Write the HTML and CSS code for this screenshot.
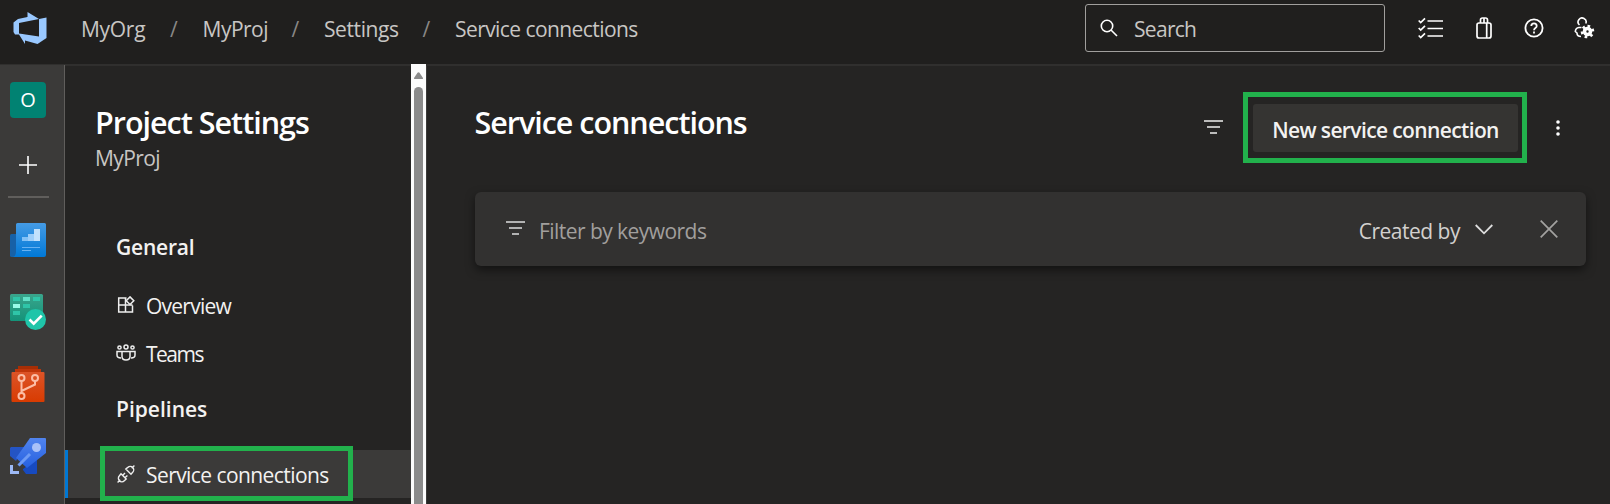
FILE: index.html
```html
<!DOCTYPE html>
<html lang="en">
<head>
<meta charset="utf-8">
<title>Service connections - Settings</title>
<link rel="stylesheet" href="styles.css">
</head>
<body>
<div class="app">
  <header class="topbar">
    <svg class="logo" width="34" height="34" viewBox="0 0 34 34"><path fill="#99c8ff" fill-rule="evenodd" d="M14.500 0 26 7 33.500 5.500V26L24.500 32 12 28.500V32L6 22.500H2L.5 20V10.500L5 7 14.500 5ZM26 7 6 11V21.500L26 24.500Z"/></svg>
    <nav class="crumbs">
      <span class="c-org">MyOrg</span><i>/</i><span class="c-proj">MyProj</span><i>/</i><span class="c-set">Settings</span><i>/</i><span class="c-svc">Service connections</span>
    </nav>
    <div class="search">
      <svg width="18" height="18" viewBox="0 0 18 18" fill="none" stroke="#fff" stroke-width="1.600"><circle cx="7" cy="7" r="5.700"/><path d="m11 11 6 6"/></svg>
      <span>Search</span>
    </div>
    <div class="tools">
      <svg width="26" height="22" viewBox="0 0 26 22" fill="none" stroke="#fff" stroke-width="1.700"><path d="M9.500 4H25M9.500 11.500H25M9.500 19H25M.7 3.500l2 2L7 1.300M.7 11l2 2L7 8.800M.7 18.500l2 2L7 16.300"/></svg>
      <svg width="16" height="22" viewBox="0 0 16 22" fill="none" stroke="#fff" stroke-width="1.700"><rect x="1" y="6" width="14" height="15" rx="2"/><path d="M4.500 6V3Q4.500 1 6.500 1h3q2 0 2 2v3M8 1v5M10.700 6v15"/></svg>
      <svg width="20" height="20" viewBox="0 0 20 20" fill="none" stroke="#fff" stroke-width="1.800"><circle cx="10" cy="10" r="8.600"/><path d="M7.300 8Q7.300 5.300 10 5.300T12.700 8Q12.700 9.200 11.400 10T10 12.300M10 13.600v2"/></svg>
      <svg width="22" height="22" viewBox="0 0 22 22" fill="none" stroke="#fff" stroke-width="1.600"><path d="M5.500 8A4 4 0 1 1 11.800 6.500M7.500 10.500H5Q1.500 11 1.300 14.500L3 16Q3 19.500 7 19.500"/><circle cx="13.500" cy="14.500" r="3" stroke-width="3.600"/><path stroke-width="2.600" stroke-dasharray="2.600 3.160" d="M13.500 9a5.500 5.500 0 1 1-.01 0"/></svg>
    </div>
  </header>
  <div class="body">
    <aside class="rail">
      <div class="avatar">O</div>
      <svg class="plus" width="18" height="18" viewBox="0 0 18 18" stroke="#fff" stroke-width="1.600"><path d="M9 0v18M0 9h18"/></svg>
      <hr>
      <svg class="app-icon" width="36" height="36" viewBox="0 0 36 36">
        <defs><linearGradient id="b" x2="0" y2="1"><stop stop-color="#459be5"/><stop offset="1" stop-color="#0078d7"/></linearGradient></defs>
        <rect y="12" width="10" height="23" rx="1.500" fill="#1761a7"/><path fill="url(#b)" d="M7.500 1H34.500Q36 1 36 2.500V33Q36 35 34 35H3Q6 34 6 30V2.500Q6 1 7.500 1Z"/><path fill="#83c1f6" d="M12 15h6v-3h6v7H12Z"/><path fill="#c3e1fc" d="M24 7h6v12h-6Z"/><path fill="#9dcefa" d="M18 12h6v7h-6Z"/><path stroke="#68b1f1" d="M12 25.500h18M12 28.500h9"/>
      </svg>
      <svg class="app-icon" width="36" height="36" viewBox="0 0 36 36">
        <defs><linearGradient id="g" x2="0" y2="1"><stop stop-color="#3aa58c"/><stop offset="1" stop-color="#149379"/></linearGradient></defs>
        <rect width="33" height="27" rx="1.500" fill="url(#g)"/><path fill="#2fc5a8" d="M3 3h7v4H3Zm20 0h7v4h-7ZM13 10h7v4h-7ZM3 17h7v4H3Z"/><path fill="#62e2c8" d="M13 3h7v4h-7Z"/><path fill="#98fbe8" d="M3 10h7v4H3Z"/><circle cx="25.500" cy="25.500" r="10.500" fill="#1fc5a9"/><path fill="none" stroke="#fff" stroke-width="2.600" d="m19.500 25.500 4.200 4.200 8-8"/>
      </svg>
      <svg class="app-icon" width="36" height="36" viewBox="0 0 36 36">
        <defs><linearGradient id="r" x2="0" y2="1"><stop stop-color="#dc5428"/><stop offset="1" stop-color="#d83b01"/></linearGradient></defs>
        <path fill="#a72e05" d="M8 0H28V3H8Z"/><path fill="#bf360a" d="M5 3H31V6H5Z"/><rect x="1.500" y="6" width="33" height="30" rx="1" fill="url(#r)"/><g fill="none" stroke="#fbbda5" stroke-width="2"><circle cx="11.500" cy="12" r="3"/><circle cx="25" cy="12" r="3"/><circle cx="11.500" cy="30" r="3"/><path d="M11.500 15v12M25 15v3.500L11.500 25"/></g>
      </svg>
      <svg class="app-icon" width="36" height="36" viewBox="0 0 36 36">
        <defs><linearGradient id="p" x2="0" y2="1"><stop stop-color="#5184ee"/><stop offset="1" stop-color="#2560e0"/></linearGradient></defs>
        <path fill="#2454c4" d="M1 9H15L6 23 0 18V10Z"/><path fill="#174ac0" d="M13 31 27 21V35Q27 36 26 36H16L13 32Z"/><path fill="url(#p)" d="M20 0H35Q36 0 36 1V15L17 30 6 20Z"/><circle cx="26.500" cy="9.500" r="4.500" fill="#a9c1f8"/><path stroke="#6d9bf4" stroke-width="3" d="M8.500 27.500 20 16"/><path fill="#9db9f5" d="M0 27h3v6h6v3H0Z"/>
      </svg>
    </aside>
    <aside class="panel">
      <div class="panel-title">Project Settings</div>
      <div class="panel-sub">MyProj</div>
      <div class="group g-general">General</div>
      <div class="item">
        <svg width="18" height="18" viewBox="0 0 18 18" fill="none" stroke="#eee" stroke-width="1.500"><path d="M9.500 2H1.700v14H15.500V9.500M1.700 9h13.800M8.500 2v14"/><path fill="#252423" d="m13 .9 3.800 3.800L13 8.500 9.200 4.700Z"/></svg>
        <span class="t-over">Overview</span>
      </div>
      <div class="item">
        <svg width="20" height="18" viewBox="0 0 20 18" fill="none" stroke="#eee" stroke-width="1.500"><circle cx="3.500" cy="3.500" r="1.600"/><circle cx="10" cy="3" r="2"/><circle cx="16.500" cy="3.500" r="1.600"/><path d="M6 7.500h8v5q0 3.500-4 3.500T6 12.500ZM6 7.500H1v3.500q0 3 4 3M14 7.500h5v3.500q0 3-4 3"/></svg>
        <span class="t-teams">Teams</span>
      </div>
      <div class="group g-pipe">Pipelines</div>
      <div class="item selected">
        <svg width="18" height="18" viewBox="0 0 18 18" fill="none" stroke="#eee" stroke-width="1.400"><path d="M.6 17.400 3.200 14.800M14.800 3.200 17.400.6M8.800 4 14 9.200l1.700-1.900a3.300 3.300 0 0 0-4.900-4.900ZM4 8.800 9.200 14l-1.900 1.700a3.300 3.300 0 0 1-4.900-4.900ZM5.800 10.200l2.200-2.200M8.200 12.600l2.200-2.200"/></svg>
        <span class="t-svc">Service connections</span>
      </div>
      <div class="highlight nav-highlight"></div>
    </aside>
    <div class="scrollbar">
      <svg width="9" height="7" viewBox="0 0 9 7"><path fill="#8b8b8b" d="M3.500.8q1-1.300 2 0L9 6q.2 1-1 1H1Q-.2 7 0 6Z"/></svg>
      <div class="thumb"></div>
    </div>
    <main class="content">
      <div class="heading">
        <h1>Service connections</h1>
        <svg class="filter-icon" width="20" height="14" viewBox="0 0 20 14" stroke="#eee" stroke-width="1.700"><path d="M0 1h19M3 7h13M6 13h7"/></svg>
        <div class="highlight button-frame"><button><span>New service connection</span></button></div>
        <svg class="more" width="4" height="16" viewBox="0 0 4 16" fill="#fff"><circle cx="2" cy="2" r="1.800"/><circle cx="2" cy="8" r="1.800"/><circle cx="2" cy="14" r="1.800"/></svg>
      </div>
      <div class="filterbar">
        <svg class="filter-icon" width="19" height="14" viewBox="0 0 19 14" stroke="#ddd" stroke-width="1.700"><path d="M0 1h19M3 7h13M6 13h7"/></svg>
        <span class="placeholder">Filter by keywords</span>
        <span class="created">Created by</span>
        <svg class="chevron" width="18" height="11" viewBox="0 0 18 11" fill="none" stroke="#ddd" stroke-width="1.800"><path d="m.7 1 8.300 8.300L17.300 1"/></svg>
        <svg class="close" width="18" height="18" viewBox="0 0 18 18" stroke="#a3a2a0" stroke-width="1.700"><path d="m.7.7 16.600 16.600M17.300.7.7 17.300"/></svg>
      </div>
    </main>
  </div>
</div>
</body>
</html>
```
FILE: styles.css
```css
* { box-sizing: border-box; }
body { margin: 0; background: #252423; color: #f3f2f1; font: 21px/28px "Open Sans", "Noto Sans", sans-serif; overflow: hidden; }
svg { flex: none; display: block; }
span, h1, .group, .panel-title { white-space: nowrap; }
.app { height: 504px; display: flex; flex-direction: column; }
.topbar { height: 66px; flex: none; display: flex; align-items: flex-start; background: #201f1e; border-bottom: 2px solid #302f2e; }
.logo { margin: 12px 0 0 12.5px; }
.crumbs { display: flex; margin: 15px 0 0 34.5px; color: #c8c6c4; }
.crumbs i { font-style: normal; color: #8a8886; width: 9px; margin: 0 23.500px 0 25px; }
.crumbs span { flex: none; }
.c-org { width: 64px; letter-spacing: -0.3px; }
.c-proj { width: 64px; letter-spacing: -0.5px; }
.c-set { width: 73.5px; letter-spacing: -0.4px; }
.c-svc { letter-spacing: -0.57px; }
.search { width: 300px; height: 48px; margin: 4px 0 0 auto; border: 1px solid #a19f9d; border-radius: 3px; display: flex; align-items: center; padding-left: 14px; color: #c8c6c4; }
.search span { margin-left: 16px; letter-spacing: -0.7px; padding-top: 2px; }
.tools { display: flex; align-items: center; height: 56px; margin: 0 14px 0 33px; }
.tools svg:nth-child(2) { margin-left: 32px; }
.tools svg:nth-child(3) { margin-left: 32px; }
.tools svg:nth-child(4) { margin-left: 30px; }
.body { flex: 1; display: flex; min-height: 0; }
.rail { width: 65px; flex: none; background: #3b3a39; border-right: 1px solid #605e5c; padding: 16px 0 0 10px; margin-top: -1px; }
.avatar { width: 36px; height: 36px; margin-top: 1px; border-radius: 4px; background: #018272; color: #fff; text-align: center; line-height: 36px; font-size: 20px; }
.plus { margin: 38px 0 0 8.5px; }
.rail hr { width: 41px; height: 2px; border: 0; background: #605e5c; margin: 22px 0 0 -2px; }
.app-icon { margin-top: 36px; }
.rail hr + .app-icon { margin-top: 24px; }
.panel { width: 346px; flex: none; position: relative; }
.panel-title { margin: 36px 0 0 30px; font-weight: 600; font-size: 30.5px; line-height: 40px; color: #fff; letter-spacing: -1px; }
.panel-sub { margin: 2px 0 0 30px; color: #c8c6c4; letter-spacing: -0.6px; }
.group { margin-left: 51px; font-weight: 600; letter-spacing: -0.2px; }
.g-general { margin-top: 61px; }
.g-pipe { margin-top: 18px; margin-bottom: 27px; letter-spacing: 0; }
.item { height: 48px; display: flex; align-items: center; padding-left: 52px; }
.g-general + .item { margin-top: 20px; }
.item span { margin-left: 11px; padding-top: 1px; letter-spacing: -0.57px; }
.item .t-over { letter-spacing: -0.75px; }
.item .t-teams { letter-spacing: -1.5px; }
.item svg[width="20"] { margin: 0 -1px; }
.selected { background: #3b3a39; border-left: 3px solid #0078d4; padding-left: 49px; }
.selected span { padding-top: 2px; }
.highlight { border: 5px solid #22b14c; }
.nav-highlight { position: absolute; left: 35px; top: 380px; width: 253px; height: 55px; }
.scrollbar { width: 15px; flex: none; background: #fcfcfc; margin-top: -2px; padding: 8px 3px 0; display: flex; flex-direction: column; }
.thumb { flex: 1; width: 9px; margin-top: 8px; border-radius: 5px 5px 0 0; background: #8b8b8b; }
.content { flex: 1; border-left: 1px solid #3b3a39; padding: 26px 24px 0 48px; }
.heading { height: 71px; display: flex; }
h1 { margin: 10px auto 0 -0.5px; font-size: 30.5px; line-height: 40px; font-weight: 600; color: #fff; letter-spacing: -1.02px; }
.heading .filter-icon { margin-top: 28px; }
.button-frame { width: 284px; height: 71px; margin-left: 19px; padding: 7px 4px 0 5px; }
button { width: 265px; height: 48px; border: 0; border-radius: 3px; background: #353432; color: #f3f2f1; font: 600 21px/28px "Open Sans", sans-serif; padding: 3px 0 0; letter-spacing: -0.62px; }
.more { margin: 28px 26px 0 29px; }
.filterbar { height: 74px; margin-top: 29px; background: #323130; border-radius: 6px; box-shadow: 0 4px 10px rgba(0,0,0,.5); display: flex; align-items: center; padding: 0 28px 0 31px; }
.filterbar .filter-icon { margin-top: -2px; }
.placeholder { margin: 3px auto 0 14px; color: #a19f9d; letter-spacing: -0.55px; }
.created { margin-top: 3px; color: #d2d0ce; letter-spacing: -0.5px; }
.chevron { margin-left: 15px; }
.close { margin-left: 47px; }
```
